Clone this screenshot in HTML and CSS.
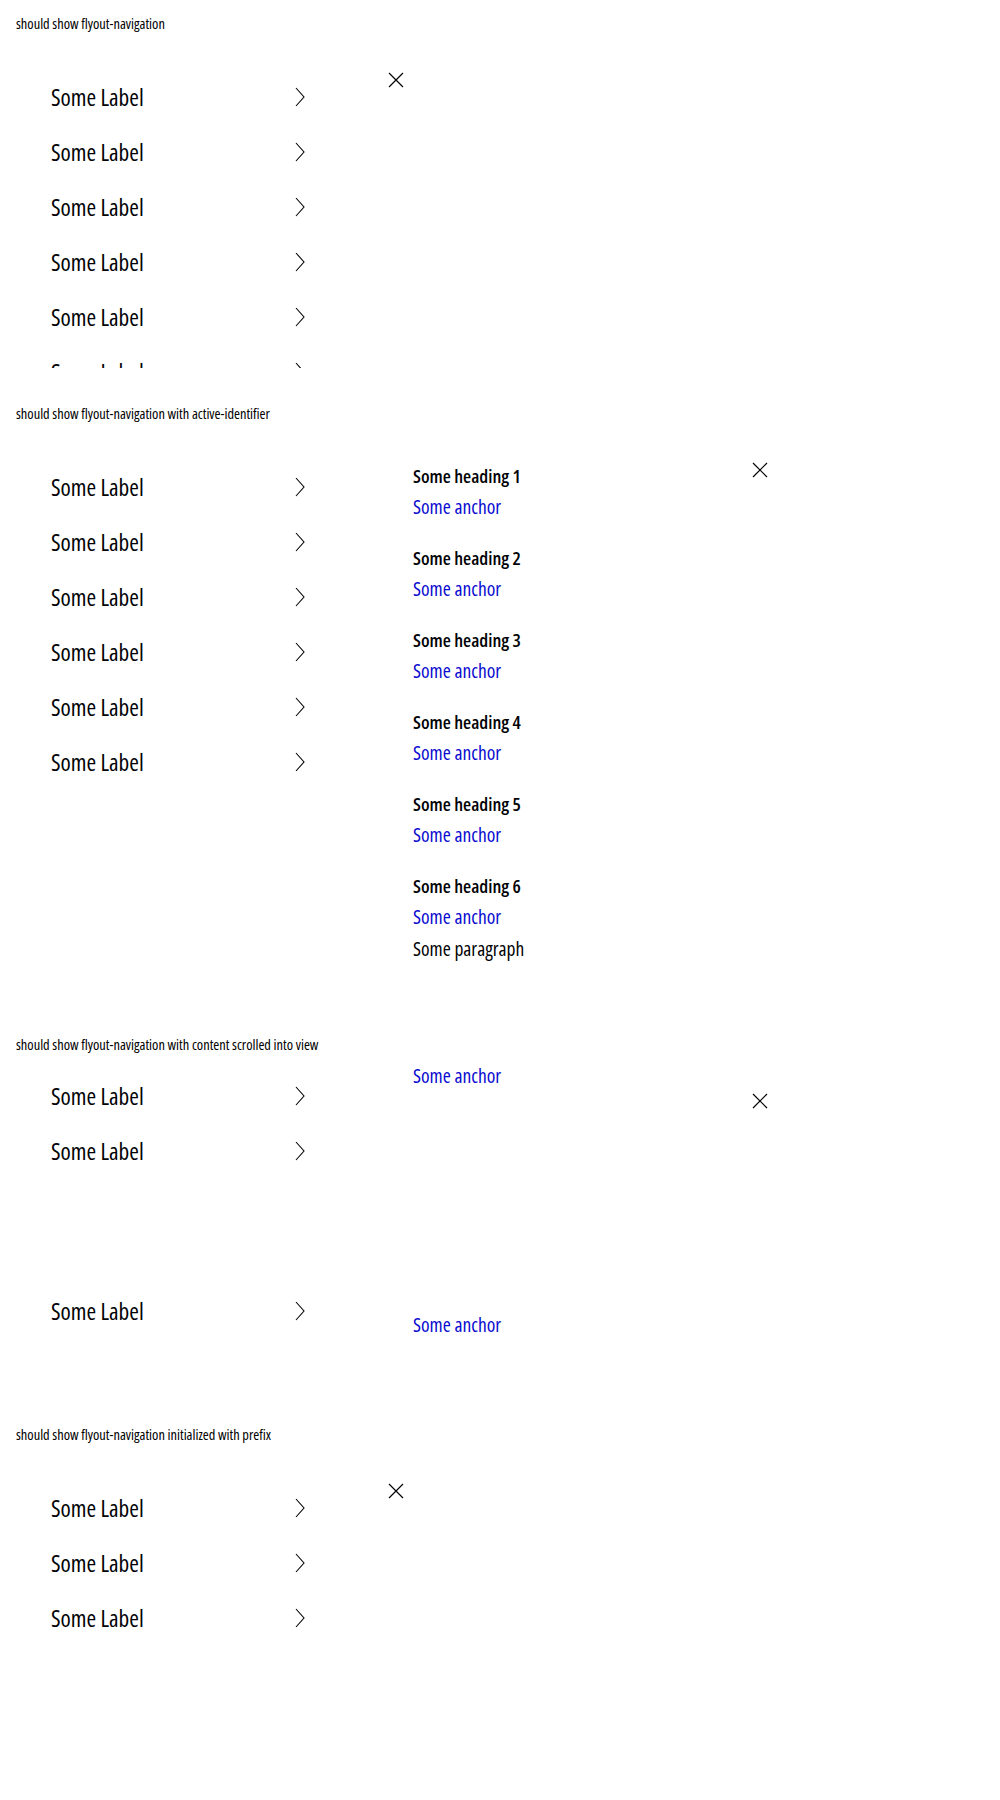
FILE: index.html
```html
<!DOCTYPE html>
<html lang="en">
<head>
<meta charset="utf-8">
<title>Flyout navigation</title>
<link rel="stylesheet" href="styles.css">
</head>
<body>

<section class="case">
  <p class="case__title">should show flyout-navigation</p>
  <div class="demo demo--short">
    <div class="flyout">
      <ul class="primary">
        <li class="item"><span class="item__label">Some Label</span><svg class="chev" viewBox="0 0 10 20" width="10" height="20"><polyline points="1,1 9,10 1,19"/></svg></li>
        <li class="item"><span class="item__label">Some Label</span><svg class="chev" viewBox="0 0 10 20" width="10" height="20"><polyline points="1,1 9,10 1,19"/></svg></li>
        <li class="item"><span class="item__label">Some Label</span><svg class="chev" viewBox="0 0 10 20" width="10" height="20"><polyline points="1,1 9,10 1,19"/></svg></li>
        <li class="item"><span class="item__label">Some Label</span><svg class="chev" viewBox="0 0 10 20" width="10" height="20"><polyline points="1,1 9,10 1,19"/></svg></li>
        <li class="item"><span class="item__label">Some Label</span><svg class="chev" viewBox="0 0 10 20" width="10" height="20"><polyline points="1,1 9,10 1,19"/></svg></li>
        <li class="item"><span class="item__label">Some Label</span><svg class="chev" viewBox="0 0 10 20" width="10" height="20"><polyline points="1,1 9,10 1,19"/></svg></li>
      </ul>
    </div>
    <button class="dismiss dismiss--primary" type="button" aria-label="Dismiss"><svg viewBox="0 0 16 16" width="16" height="16"><path d="M1 1L15 15M15 1L1 15"/></svg></button>
  </div>
</section>

<section class="case">
  <p class="case__title">should show flyout-navigation with active-identifier</p>
  <div class="demo demo--tall">
    <div class="flyout">
      <ul class="primary">
        <li class="item"><span class="item__label">Some Label</span><svg class="chev" viewBox="0 0 10 20" width="10" height="20"><polyline points="1,1 9,10 1,19"/></svg></li>
        <li class="item"><span class="item__label">Some Label</span><svg class="chev" viewBox="0 0 10 20" width="10" height="20"><polyline points="1,1 9,10 1,19"/></svg></li>
        <li class="item"><span class="item__label">Some Label</span><svg class="chev" viewBox="0 0 10 20" width="10" height="20"><polyline points="1,1 9,10 1,19"/></svg></li>
        <li class="item"><span class="item__label">Some Label</span><svg class="chev" viewBox="0 0 10 20" width="10" height="20"><polyline points="1,1 9,10 1,19"/></svg></li>
        <li class="item"><span class="item__label">Some Label</span><svg class="chev" viewBox="0 0 10 20" width="10" height="20"><polyline points="1,1 9,10 1,19"/></svg></li>
        <li class="item"><span class="item__label">Some Label</span><svg class="chev" viewBox="0 0 10 20" width="10" height="20"><polyline points="1,1 9,10 1,19"/></svg></li>
      </ul>
      <div class="secondary">
        <div class="group"><h3 class="group__heading">Some heading 1</h3><a class="group__link" href="#">Some anchor</a></div>
        <div class="group"><h3 class="group__heading">Some heading 2</h3><a class="group__link" href="#">Some anchor</a></div>
        <div class="group"><h3 class="group__heading">Some heading 3</h3><a class="group__link" href="#">Some anchor</a></div>
        <div class="group"><h3 class="group__heading">Some heading 4</h3><a class="group__link" href="#">Some anchor</a></div>
        <div class="group"><h3 class="group__heading">Some heading 5</h3><a class="group__link" href="#">Some anchor</a></div>
        <div class="group"><h3 class="group__heading">Some heading 6</h3><a class="group__link" href="#">Some anchor</a><p class="group__text">Some paragraph</p></div>
      </div>
    </div>
    <button class="dismiss dismiss--secondary" type="button" aria-label="Dismiss"><svg viewBox="0 0 16 16" width="16" height="16"><path d="M1 1L15 15M15 1L1 15"/></svg></button>
  </div>
</section>

<section class="case">
  <p class="case__title">should show flyout-navigation with content scrolled into view</p>
  <div class="demo demo--short">
    <div class="flyout">
      <ul class="primary primary--scrolled">
        <li class="item"><span class="item__label">Some Label</span><svg class="chev" viewBox="0 0 10 20" width="10" height="20"><polyline points="1,1 9,10 1,19"/></svg></li>
        <li class="item"><span class="item__label">Some Label</span><svg class="chev" viewBox="0 0 10 20" width="10" height="20"><polyline points="1,1 9,10 1,19"/></svg></li>
        <li class="spacer spacer--primary" aria-hidden="true"></li>
        <li class="item"><span class="item__label">Some Label</span><svg class="chev" viewBox="0 0 10 20" width="10" height="20"><polyline points="1,1 9,10 1,19"/></svg></li>
      </ul>
      <div class="secondary secondary--scrolled">
        <a class="group__link group__link--solo" href="#">Some anchor</a>
        <div class="spacer spacer--secondary" aria-hidden="true"></div>
        <a class="group__link group__link--solo" href="#">Some anchor</a>
      </div>
    </div>
    <button class="dismiss dismiss--secondary" type="button" aria-label="Dismiss"><svg viewBox="0 0 16 16" width="16" height="16"><path d="M1 1L15 15M15 1L1 15"/></svg></button>
  </div>
</section>

<section class="case">
  <p class="case__title">should show flyout-navigation initialized with prefix</p>
  <div class="demo demo--short">
    <div class="flyout">
      <ul class="primary">
        <li class="item"><span class="item__label">Some Label</span><svg class="chev" viewBox="0 0 10 20" width="10" height="20"><polyline points="1,1 9,10 1,19"/></svg></li>
        <li class="item"><span class="item__label">Some Label</span><svg class="chev" viewBox="0 0 10 20" width="10" height="20"><polyline points="1,1 9,10 1,19"/></svg></li>
        <li class="item"><span class="item__label">Some Label</span><svg class="chev" viewBox="0 0 10 20" width="10" height="20"><polyline points="1,1 9,10 1,19"/></svg></li>
      </ul>
    </div>
    <button class="dismiss dismiss--primary" type="button" aria-label="Dismiss"><svg viewBox="0 0 16 16" width="16" height="16"><path d="M1 1L15 15M15 1L1 15"/></svg></button>
  </div>
</section>

</body>
</html>
```

FILE: styles.css
```css
* { box-sizing: border-box; }

html, body {
  margin: 0;
  padding: 0;
  background: #fff;
}

body {
  font-family: "Open Sans", "Liberation Sans", Arial, sans-serif;
  font-stretch: 75%;
  color: #010205;
}

.case {
  padding: 16px 0 22px;
}

.case__title {
  margin: 0 0 8px 16px;
  font-size: 14.4px;
  line-height: 16px;
  color: #000;
}

.demo {
  position: relative;
  overflow: hidden;
}

.demo--short { height: 328px; }
.demo--tall { height: 569px; }

.flyout {
  display: flex;
  align-items: flex-start;
}

.primary {
  list-style: none;
  margin: 0;
  padding: 29px 0 0 51px;
  width: 365px;
  flex: none;
}

.primary--scrolled { padding-top: 7px; }

.item {
  display: flex;
  align-items: center;
  justify-content: space-between;
  width: 254px;
  height: 55px;
}

.item__label {
  font-size: 23.3px;
  line-height: 28px;
}

.chev {
  display: block;
  fill: none;
  stroke: #010205;
  stroke-width: 1.1;
}

.spacer--primary { height: 105px; }

.secondary {
  width: 435px;
  padding: 34px 0 0 48px;
}

.secondary--scrolled { padding-top: 3px; }

.group {
  display: flex;
  flex-direction: column;
  align-items: flex-start;
  margin-bottom: 27px;
}

.group__heading {
  margin: 0;
  font-size: 18.6px;
  font-weight: 600;
  line-height: 24px;
}

.group__link {
  display: block;
  margin-top: 7px;
  font-size: 19.5px;
  line-height: 24px;
  color: #0a0ad0;
  text-decoration: none;
}

.group__link--solo { margin-top: 0; }

.group__text {
  margin: 8px 0 0;
  font-size: 19.5px;
  line-height: 24px;
}

.spacer--secondary { height: 225px; }

.dismiss {
  position: absolute;
  top: 32px;
  width: 16px;
  height: 16px;
  padding: 0;
  border: 0;
  background: transparent;
  cursor: pointer;
}

.dismiss svg {
  display: block;
  fill: none;
  stroke: #010205;
  stroke-width: 1.2;
}

.dismiss--primary { left: 388px; }
.dismiss--secondary { left: 752px; }
```
